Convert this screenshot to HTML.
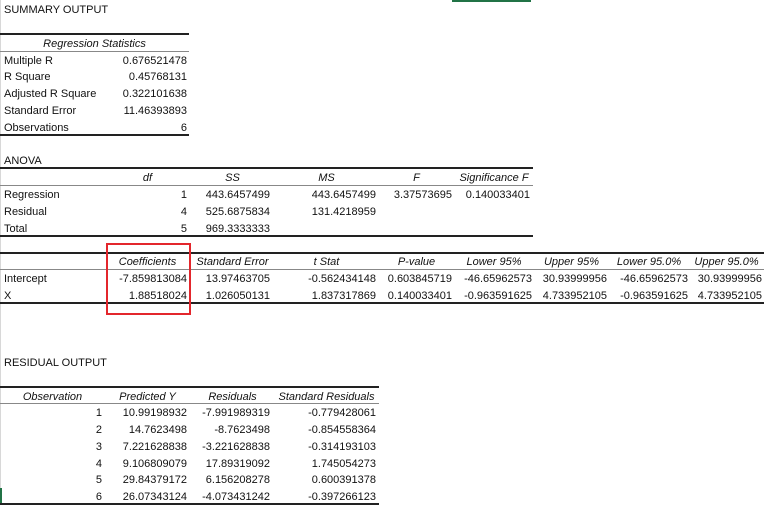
<!DOCTYPE html>
<html><head><meta charset="utf-8"><style>
html,body{margin:0;padding:0;background:#fff;}
body{width:768px;height:505px;position:relative;overflow:hidden;font-family:"Liberation Sans",Arial,sans-serif;font-size:11px;color:#111;}
.t{position:absolute;height:16px;line-height:16px;white-space:nowrap;margin-top:1px;}
.l{text-align:left}
.r{text-align:right}
.c{text-align:center}
.i{font-style:italic}
.h{position:absolute;height:0;}
.k{border-top:2px solid #222;}
.g{border-top:1px solid #888;}
</style></head><body>
<div style="position:absolute;left:0;top:0;width:1px;height:505px;background:#d8d8d8"></div>
<div style="position:absolute;left:452px;top:0;width:79px;height:2px;background:#217346"></div>
<div style="position:absolute;left:0;top:488px;width:2px;height:17px;background:#217346"></div>

<div class="t l" style="left:4px;top:1px">SUMMARY OUTPUT</div>

<div class="h k" style="left:0;top:33px;width:189px"></div>
<div class="t c i" style="left:0;top:35px;width:189px">Regression Statistics</div>
<div class="h g" style="left:0;top:51px;width:189px"></div>
<div class="t l" style="left:4px;top:52px">Multiple R</div><div class="t r" style="left:100px;width:87px;top:52px">0.676521478</div>
<div class="t l" style="left:4px;top:68px">R Square</div><div class="t r" style="left:100px;width:87px;top:68px">0.45768131</div>
<div class="t l" style="left:4px;top:85px">Adjusted R Square</div><div class="t r" style="left:100px;width:87px;top:85px">0.322101638</div>
<div class="t l" style="left:4px;top:102px">Standard Error</div><div class="t r" style="left:100px;width:87px;top:102px">11.46393893</div>
<div class="t l" style="left:4px;top:119px">Observations</div><div class="t r" style="left:100px;width:87px;top:119px">6</div>
<div class="h k" style="left:0;top:134px;width:189px"></div>

<div class="t l" style="left:4px;top:152px">ANOVA</div>
<div class="h k" style="left:0;top:167px;width:533px"></div>
<div class="t c i" style="left:105px;width:85px;top:169px">df</div>
<div class="t c i" style="left:190px;width:85px;top:169px">SS</div>
<div class="t c i" style="left:275px;width:103px;top:169px">MS</div>
<div class="t c i" style="left:378px;width:77px;top:169px">F</div>
<div class="t c i" style="left:455px;width:78px;top:169px">Significance F</div>
<div class="h g" style="left:0;top:185px;width:533px"></div>
<div class="t l" style="left:4px;top:186px">Regression</div>
<div class="t r" style="left:100px;width:87px;top:186px">1</div>
<div class="t r" style="left:190px;width:80px;top:186px">443.6457499</div>
<div class="t r" style="left:275px;width:101px;top:186px">443.6457499</div>
<div class="t r" style="left:378px;width:74px;top:186px">3.37573695</div>
<div class="t r" style="left:455px;width:75px;top:186px">0.140033401</div>
<div class="t l" style="left:4px;top:203px">Residual</div>
<div class="t r" style="left:100px;width:87px;top:203px">4</div>
<div class="t r" style="left:190px;width:80px;top:203px">525.6875834</div>
<div class="t r" style="left:275px;width:101px;top:203px">131.4218959</div>
<div class="t l" style="left:4px;top:220px">Total</div>
<div class="t r" style="left:100px;width:87px;top:220px">5</div>
<div class="t r" style="left:190px;width:80px;top:220px">969.3333333</div>
<div class="h k" style="left:0;top:235px;width:533px"></div>

<div class="h k" style="left:0;top:252px;width:764px"></div>
<div class="t c i" style="left:105px;width:85px;top:253px">Coefficients</div>
<div class="t c i" style="left:190px;width:85px;top:253px">Standard Error</div>
<div class="t c i" style="left:275px;width:103px;top:253px">t Stat</div>
<div class="t c i" style="left:378px;width:77px;top:253px">P-value</div>
<div class="t c i" style="left:455px;width:78px;top:253px">Lower 95%</div>
<div class="t c i" style="left:533px;width:77px;top:253px">Upper 95%</div>
<div class="t c i" style="left:610px;width:78px;top:253px">Lower 95.0%</div>
<div class="t c i" style="left:688px;width:77px;top:253px">Upper 95.0%</div>
<div class="h g" style="left:0;top:269px;width:764px"></div>
<div class="t l" style="left:4px;top:270px">Intercept</div>
<div class="t r" style="left:100px;width:87px;top:270px">-7.859813084</div>
<div class="t r" style="left:190px;width:80px;top:270px">13.97463705</div>
<div class="t r" style="left:275px;width:101px;top:270px">-0.562434148</div>
<div class="t r" style="left:378px;width:74px;top:270px">0.603845719</div>
<div class="t r" style="left:455px;width:77px;top:270px">-46.65962573</div>
<div class="t r" style="left:533px;width:74px;top:270px">30.93999956</div>
<div class="t r" style="left:610px;width:78px;top:270px">-46.65962573</div>
<div class="t r" style="left:688px;width:74px;top:270px">30.93999956</div>
<div class="t l" style="left:4px;top:287px">X</div>
<div class="t r" style="left:100px;width:87px;top:287px">1.88518024</div>
<div class="t r" style="left:190px;width:80px;top:287px">1.026050131</div>
<div class="t r" style="left:275px;width:101px;top:287px">1.837317869</div>
<div class="t r" style="left:378px;width:74px;top:287px">0.140033401</div>
<div class="t r" style="left:455px;width:77px;top:287px">-0.963591625</div>
<div class="t r" style="left:533px;width:74px;top:287px">4.733952105</div>
<div class="t r" style="left:610px;width:78px;top:287px">-0.963591625</div>
<div class="t r" style="left:688px;width:74px;top:287px">4.733952105</div>
<div class="h k" style="left:0;top:302px;width:764px"></div>

<div style="position:absolute;left:106px;top:243px;width:81px;height:68px;border:2px solid #e3262c"></div>

<div class="t l" style="left:4px;top:354px">RESIDUAL OUTPUT</div>
<div class="h k" style="left:0;top:386px;width:379px"></div>
<div class="t c i" style="left:0;width:105px;top:388px">Observation</div>
<div class="t c i" style="left:105px;width:85px;top:388px">Predicted Y</div>
<div class="t c i" style="left:190px;width:85px;top:388px">Residuals</div>
<div class="t c i" style="left:275px;width:103px;top:388px">Standard Residuals</div>
<div class="h g" style="left:0;top:403px;width:379px"></div>

<div class="t r" style="left:0;width:102px;top:404px">1</div><div class="t r" style="left:105px;width:82px;top:404px">10.99198932</div><div class="t r" style="left:190px;width:80px;top:404px">-7.991989319</div><div class="t r" style="left:275px;width:101px;top:404px">-0.779428061</div>
<div class="t r" style="left:0;width:102px;top:421px">2</div><div class="t r" style="left:105px;width:82px;top:421px">14.7623498</div><div class="t r" style="left:190px;width:80px;top:421px">-8.7623498</div><div class="t r" style="left:275px;width:101px;top:421px">-0.854558364</div>
<div class="t r" style="left:0;width:102px;top:438px">3</div><div class="t r" style="left:105px;width:82px;top:438px">7.221628838</div><div class="t r" style="left:190px;width:80px;top:438px">-3.221628838</div><div class="t r" style="left:275px;width:101px;top:438px">-0.314193103</div>
<div class="t r" style="left:0;width:102px;top:455px">4</div><div class="t r" style="left:105px;width:82px;top:455px">9.106809079</div><div class="t r" style="left:190px;width:80px;top:455px">17.89319092</div><div class="t r" style="left:275px;width:101px;top:455px">1.745054273</div>
<div class="t r" style="left:0;width:102px;top:471px">5</div><div class="t r" style="left:105px;width:82px;top:471px">29.84379172</div><div class="t r" style="left:190px;width:80px;top:471px">6.156208278</div><div class="t r" style="left:275px;width:101px;top:471px">0.600391378</div>
<div class="t r" style="left:0;width:102px;top:488px">6</div><div class="t r" style="left:105px;width:82px;top:488px">26.07343124</div><div class="t r" style="left:190px;width:80px;top:488px">-4.073431242</div><div class="t r" style="left:275px;width:101px;top:488px">-0.397266123</div>
<div class="h k" style="left:0;top:503px;width:379px"></div>
</body></html>
